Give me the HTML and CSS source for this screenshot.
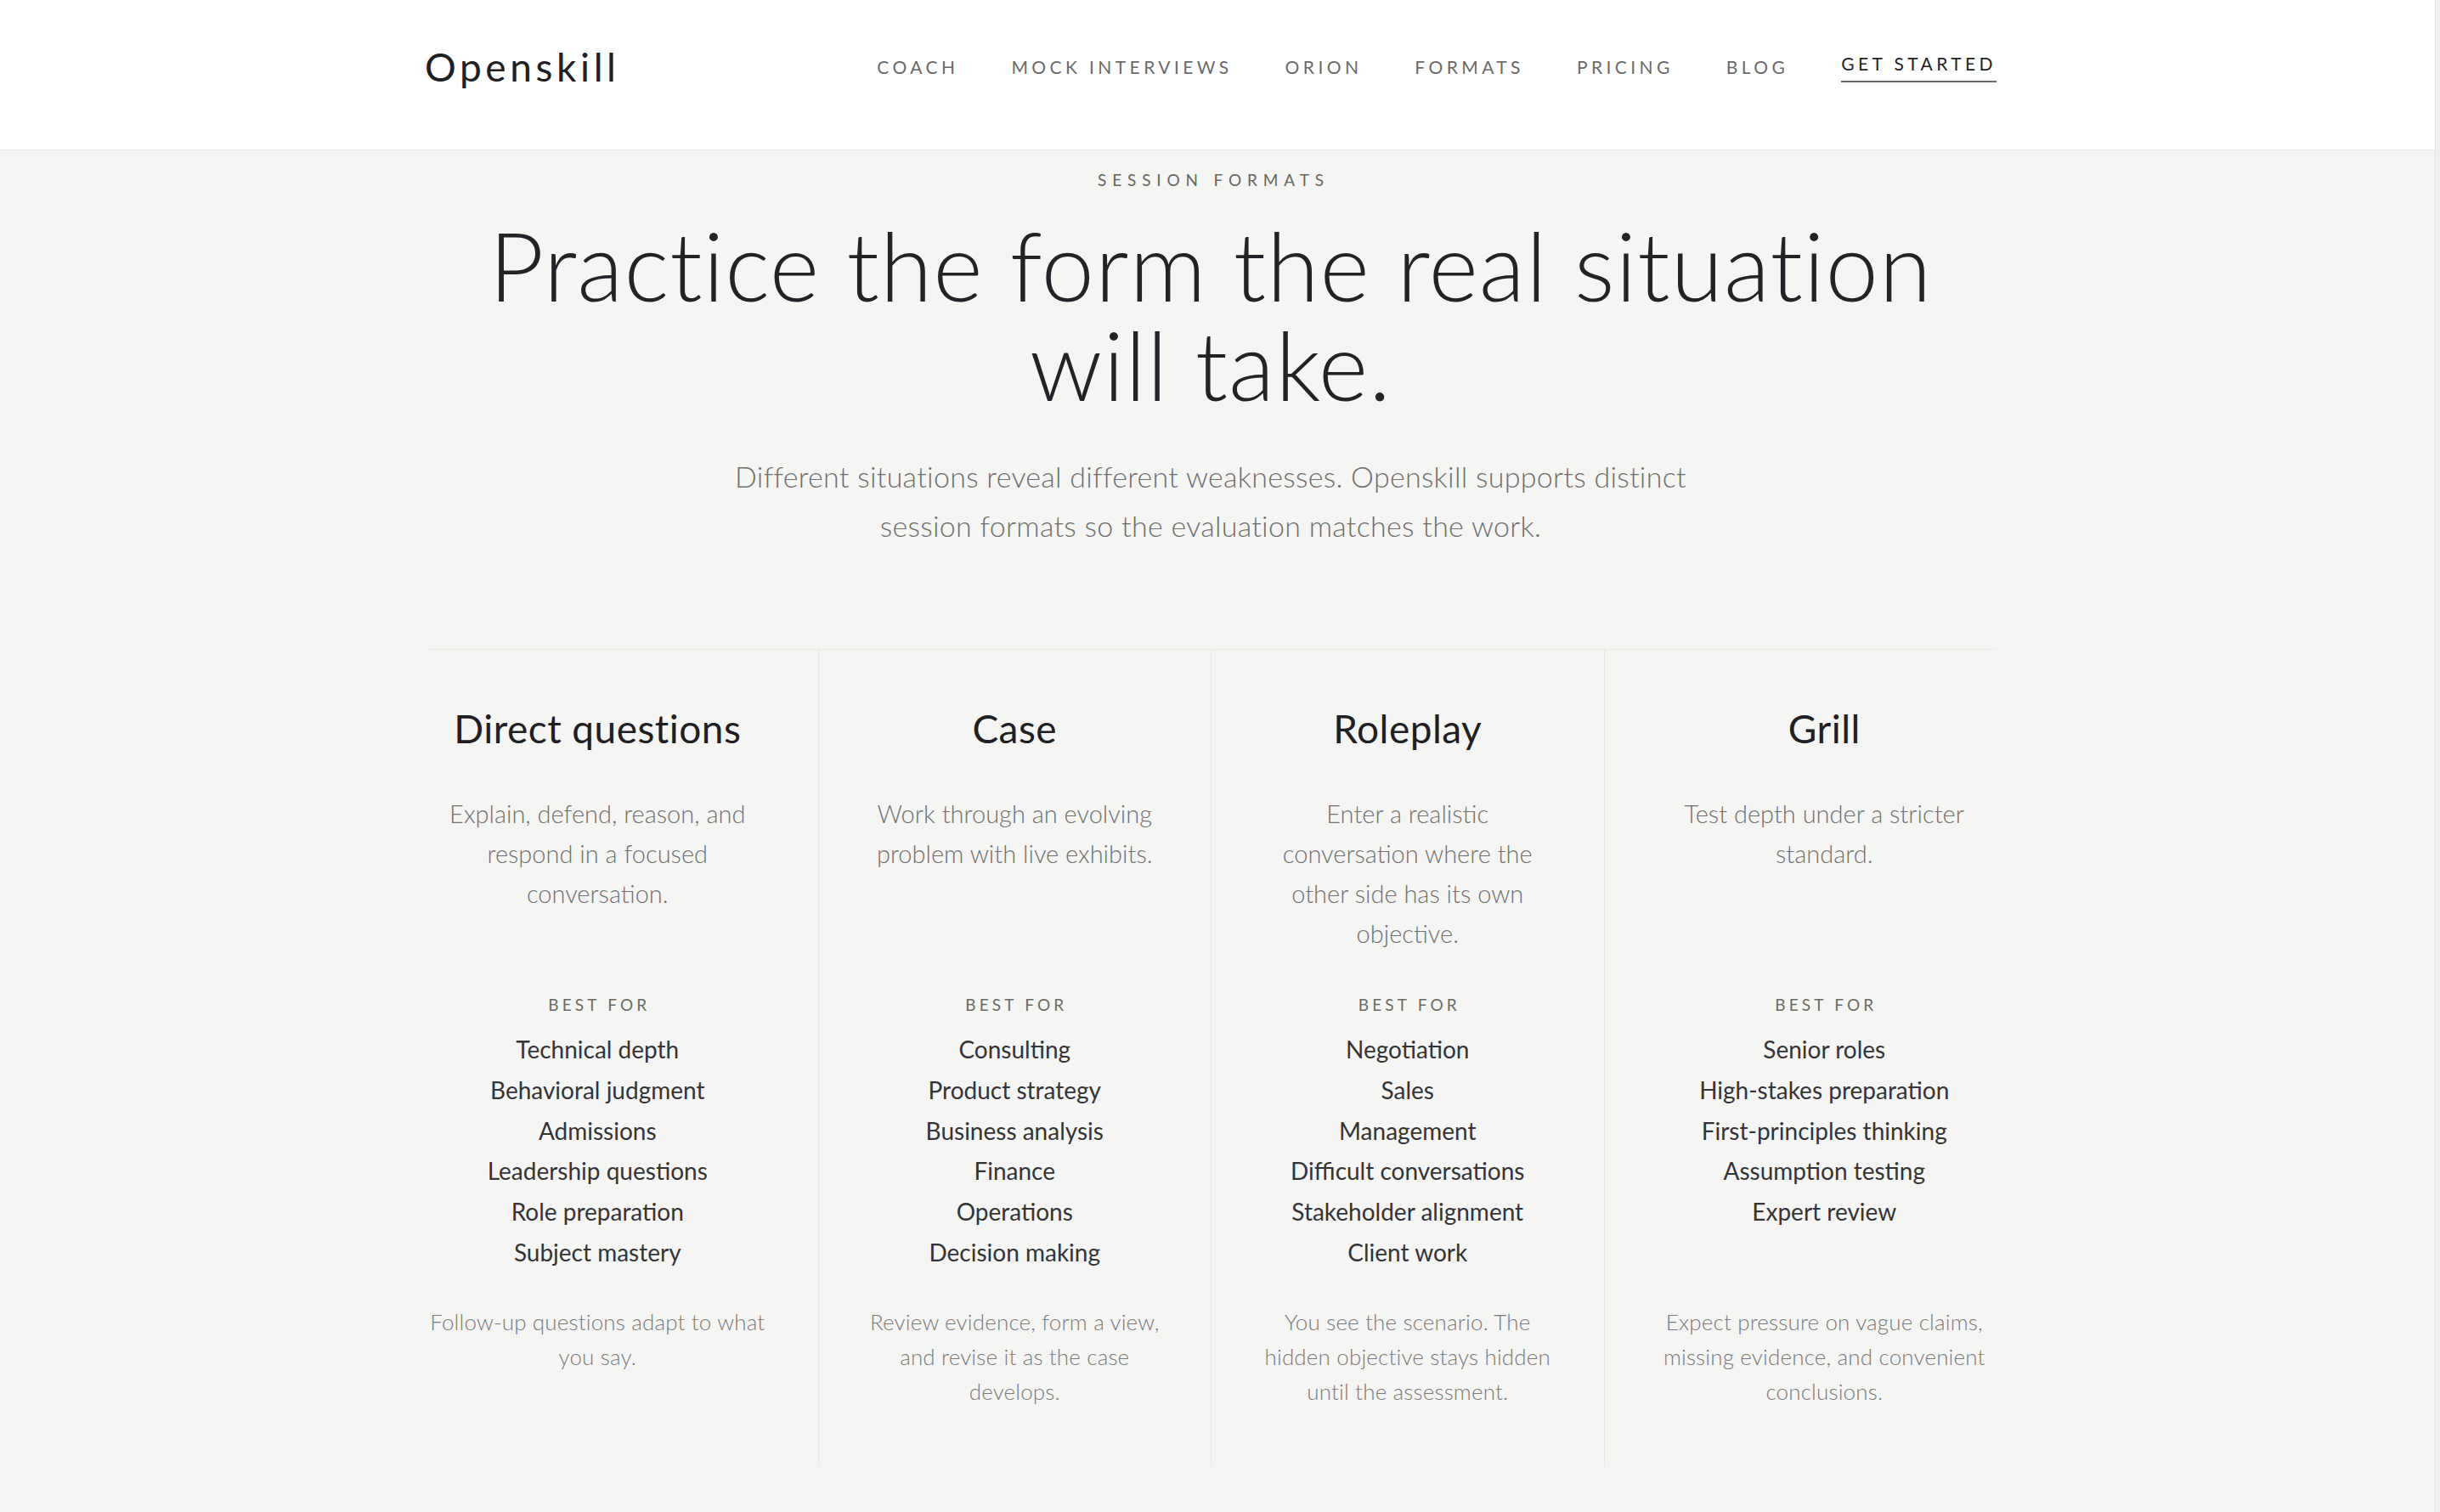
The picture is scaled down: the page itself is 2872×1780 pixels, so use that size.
FILE: index.html
```
<!DOCTYPE html>
<html lang="en">
<head>
<meta charset="utf-8">
<title>Openskill — Session formats</title>
<link rel="stylesheet" href="styles.css">
</head>
<body>
<div class="page">
  <header class="site-header">
    <div class="header-inner">
      <a class="logo" href="#">Openskill</a>
      <nav class="nav">
        <a class="nav-link" href="#">COACH</a>
        <a class="nav-link" href="#">MOCK INTERVIEWS</a>
        <a class="nav-link" href="#">ORION</a>
        <a class="nav-link" href="#">FORMATS</a>
        <a class="nav-link" href="#">PRICING</a>
        <a class="nav-link" href="#">BLOG</a>
        <a class="nav-link nav-cta" href="#">GET STARTED</a>
      </nav>
    </div>
  </header>

  <main class="formats">
    <p class="eyebrow">SESSION FORMATS</p>
    <h1 class="headline">Practice the form the real situation will take.</h1>
    <p class="lede">Different situations reveal different weaknesses. Openskill supports distinct session formats so the evaluation matches the work.</p>

    <div class="cards">
      <article class="card">
        <h2 class="card-title">Direct questions</h2>
        <p class="card-desc">Explain, defend, reason, and respond in a focused conversation.</p>
        <p class="card-label">BEST FOR</p>
        <ul class="card-list">
          <li>Technical depth</li>
          <li>Behavioral judgment</li>
          <li>Admissions</li>
          <li>Leadership questions</li>
          <li>Role preparation</li>
          <li>Subject mastery</li>
        </ul>
        <p class="card-note">Follow-up questions adapt to what you say.</p>
      </article>

      <article class="card">
        <h2 class="card-title">Case</h2>
        <p class="card-desc">Work through an evolving problem with live exhibits.</p>
        <p class="card-label">BEST FOR</p>
        <ul class="card-list">
          <li>Consulting</li>
          <li>Product strategy</li>
          <li>Business analysis</li>
          <li>Finance</li>
          <li>Operations</li>
          <li>Decision making</li>
        </ul>
        <p class="card-note">Review evidence, form a view, and revise it as the case develops.</p>
      </article>

      <article class="card">
        <h2 class="card-title">Roleplay</h2>
        <p class="card-desc">Enter a realistic conversation where the other side has its own objective.</p>
        <p class="card-label">BEST FOR</p>
        <ul class="card-list">
          <li>Negotiation</li>
          <li>Sales</li>
          <li>Management</li>
          <li>Difficult conversations</li>
          <li>Stakeholder alignment</li>
          <li>Client work</li>
        </ul>
        <p class="card-note">You see the scenario. The hidden objective stays hidden until the assessment.</p>
      </article>

      <article class="card">
        <h2 class="card-title">Grill</h2>
        <p class="card-desc">Test depth under a stricter standard.</p>
        <p class="card-label">BEST FOR</p>
        <ul class="card-list">
          <li>Senior roles</li>
          <li>High-stakes preparation</li>
          <li>First-principles thinking</li>
          <li>Assumption testing</li>
          <li>Expert review</li>
        </ul>
        <p class="card-note">Expect pressure on vague claims, missing evidence, and convenient conclusions.</p>
      </article>
    </div>
  </main>
</div>
<div class="scroll-rail"></div>
</body>
</html>
```

FILE: styles.css
```
* {
  box-sizing: border-box;
}

html, body {
  margin: 0;
  padding: 0;
}

body {
  display: flex;
  min-height: 100vh;
  background: #f5f5f3;
  font-family: "Lato", "Liberation Sans", sans-serif;
  color: #222327;
  overflow: hidden;
}

.page {
  flex: 1;
  min-width: 0;
}

.scroll-rail {
  width: 6px;
  flex: none;
  background: #f0f0ef;
  border-left: 1px solid #e3e3e1;
}

/* Header */
.site-header {
  background: #ffffff;
  border-bottom: 1px solid #e9e9e7;
  padding-right: 16px;
}

.header-inner {
  width: 1850px;
  margin: 0 auto;
  height: 176px;
  padding-bottom: 19px;
  display: flex;
  align-items: center;
  justify-content: space-between;
}

.logo {
  font-size: 46px;
  font-weight: 400;
  letter-spacing: 0.1em;
  color: #1f2023;
  text-decoration: none;
  line-height: 1.2;
}

.nav {
  display: flex;
  align-items: center;
  gap: 62px;
}

.nav-link {
  font-size: 21px;
  letter-spacing: 0.21em;
  color: #6a6a6a;
  text-decoration: none;
  line-height: 26px;
}

.nav-cta {
  color: #222327;
  padding-bottom: 7px;
  border-bottom: 2px solid #6c6c6c;
  margin-top: 2px;
}

/* Main */
.formats {
  padding: 22px 16px 0 0;
}

.eyebrow {
  margin: 0;
  text-align: center;
  font-size: 19px;
  line-height: 26px;
  letter-spacing: 0.36em;
  color: #66675f;
  padding-left: 0.36em;
}

.headline {
  width: 1850px;
  margin: 28px auto 0;
  text-align: center;
  font-size: 112px;
  font-weight: 300;
  line-height: 117px;
  letter-spacing: 0.008em;
  color: #222327;
}

.lede {
  max-width: 1170px;
  margin: 45px auto 0;
  text-align: center;
  font-size: 34px;
  font-weight: 300;
  line-height: 58px;
  letter-spacing: 0.008em;
  color: #6e6e6e;
}

/* Cards */
.cards {
  width: 1850px;
  margin: 116px auto 0;
  display: grid;
  grid-template-columns: repeat(4, 1fr);
  border-top: 1px solid #ebebe8;
  text-align: center;
}

.card {
  padding: 65px 56px 67px;
  border-left: 1px solid #e8e8e5;
}

.card:first-child {
  padding-left: 0;
  border-left: none;
}

.card:last-child {
  padding-right: 0;
}

.card-title {
  margin: 0;
  font-size: 46px;
  font-weight: 400;
  line-height: 56px;
  letter-spacing: 0.01em;
  color: #1f2023;
}

.card-desc {
  margin: 48px 0 0;
  min-height: 188px;
  font-size: 29px;
  font-weight: 300;
  line-height: 47px;
  color: #707070;
}

.card-label {
  margin: 48px 0 0;
  font-size: 19px;
  line-height: 26px;
  letter-spacing: 0.22em;
  padding-left: 0.22em;
  color: #6a6c64;
}

.card-list {
  list-style: none;
  margin: 16px 0 0;
  padding: 0;
  min-height: 287px;
  font-size: 28px;
  line-height: 47.8px;
  color: #333438;
}

.card-note {
  margin: 37px 0 0;
  font-size: 26px;
  font-weight: 300;
  line-height: 41px;
  letter-spacing: 0.006em;
  color: #7a7a7a;
}
```
